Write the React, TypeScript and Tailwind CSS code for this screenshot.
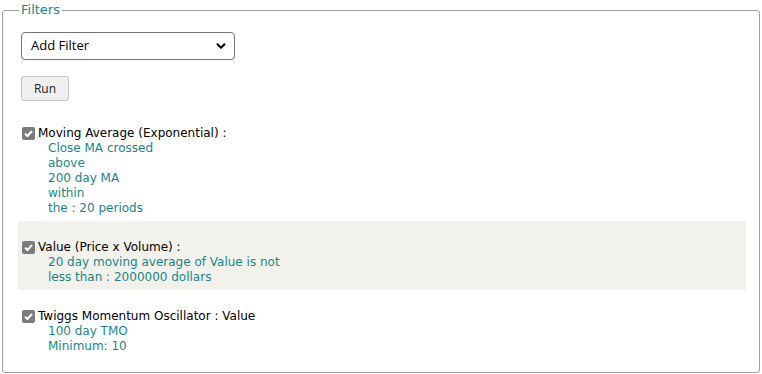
import { ChevronDown } from 'lucide-react';

const FILTERS = [
  {
    id: 'ema',
    title: 'Moving Average (Exponential) :',
    lines: ['Close MA crossed', 'above', '200 day MA', 'within', 'the : 20 periods'],
    shaded: false,
  },
  {
    id: 'value',
    title: 'Value (Price x Volume) :',
    lines: ['20 day moving average of Value is not', 'less than : 2000000 dollars'],
    shaded: true,
  },
  {
    id: 'tmo',
    title: 'Twiggs Momentum Oscillator : Value',
    lines: ['100 day TMO', 'Minimum: 10'],
    shaded: false,
  },
];

function CheckMark() {
  return (
    <span className="w-[13px] h-[13px] rounded-[2px] bg-[#7b7b7b] flex items-center justify-center shrink-0 mt-[1px]">
      <svg width="11" height="11" viewBox="0 0 11 11">
        <path d="M2 5.6 L4.4 8 L9 3" fill="none" stroke="#fff" strokeWidth="2" />
      </svg>
    </span>
  );
}

export default function App() {
  return (
    <div className="w-[762px] h-[374px] bg-white font-['DejaVu_Sans',sans-serif] text-[12px] text-black">
      <fieldset className="ml-[2px] w-[758px] border border-[#a0a0a0] rounded-[3px] pl-[15px] pr-[13px] pb-[13px]">
        <legend className="ml-[1px] px-[2px] text-[13px] leading-[20px] text-[#168888]">Filters</legend>

        {/* Add filter + run */}
        <div className="ml-[3px] mt-[12px] w-[214px] h-[28px] border border-[#767676] rounded-[4px] flex items-center justify-between pl-[9px] pr-[6px] text-[13px] font-['Open_Sans',sans-serif]">
          <span>Add Filter</span>
          <ChevronDown size={14} strokeWidth={3.5} />
        </div>
        <button className="ml-[3px] mt-[16px] w-[48px] h-[25px] bg-[#efefef] border border-[#c4c4c4] rounded-[3px] text-[12px] text-[#222] font-['Open_Sans',sans-serif] flex items-center justify-center">
          Run
        </button>

        {/* Filter list */}
        <div className="mt-[6px] flex flex-col">
          {FILTERS.map(f => (
            <div
              key={f.id}
              className={`pl-[4px] pt-[19px] pb-[5px] leading-[15px] ${f.shaded ? 'bg-[#f2f1ec]' : ''}`}
            >
              <div className="flex items-start gap-[3px]">
                <CheckMark />
                <span>{f.title}</span>
              </div>
              <div className="pl-[26px] text-[#168888]">
                {f.lines.map(l => (
                  <div key={l}>{l}</div>
                ))}
              </div>
            </div>
          ))}
        </div>
      </fieldset>
    </div>
  );
}
